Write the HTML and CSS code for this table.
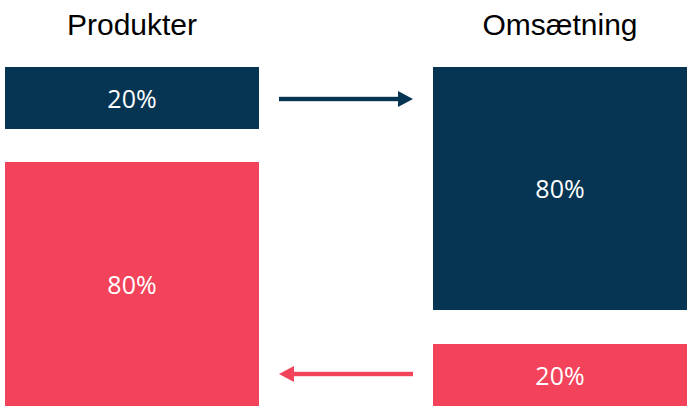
FILE: index.html
```html
<!DOCTYPE html>
<html lang="da">
<head>
<meta charset="utf-8">
<title>Produkter og omsætning</title>
<link rel="stylesheet" href="styles.css">
</head>
<body>
<div class="chart">
  <div class="col">
    <div class="title">Produkter</div>
    <div class="box navy small">20%</div>
    <div class="box pink large left-large">80%</div>
  </div>
  <div class="mid">
    <svg class="arrow arrow-top" width="134" height="16" viewBox="0 0 134 16">
      <rect x="0" y="5.8" width="120" height="4.4" fill="#063553"/>
      <polygon points="119,0 134,8 119,16" fill="#063553"/>
    </svg>
    <svg class="arrow arrow-bottom" width="134" height="16" viewBox="0 0 134 16">
      <rect x="14" y="5.8" width="120" height="4.4" fill="#f2435b"/>
      <polygon points="15,0 0,8 15,16" fill="#f2435b"/>
    </svg>
  </div>
  <div class="col">
    <div class="title">Omsætning</div>
    <div class="box navy large right-large">80%</div>
    <div class="box pink small right-small">20%</div>
  </div>
</div>
</body>
</html>
```
FILE: styles.css
```css
html, body {
  margin: 0;
  padding: 0;
  background: #ffffff;
}
.chart {
  display: flex;
  padding-left: 5px;
  width: 692px;
  height: 411px;
  box-sizing: border-box;
}
.col {
  width: 254px;
  display: flex;
  flex-direction: column;
}
.title {
  height: 67px;
  box-sizing: border-box;
  padding-top: 10px;
  font-family: "Liberation Sans", Arial, sans-serif;
  font-size: 30px;
  line-height: 30px;
  color: #000;
  text-align: center;
}
.box {
  display: flex;
  align-items: center;
  justify-content: center;
  color: #ffffff;
  font-family: "Open Sans", Lato, sans-serif;
  font-size: 25px;
  line-height: 1;
}
.navy { background: #063553; }
.pink { background: #f2435b; }
.small { height: 62px; }
.left-large {
  height: 244px;
  margin-top: 33px;
}
.right-large {
  height: 243px;
}
.right-small {
  margin-top: 34px;
}
.mid {
  width: 174px;
  display: flex;
  flex-direction: column;
}
.arrow {
  display: block;
  margin-left: 20px;
}
.arrow-top {
  margin-top: 91px;
}
.arrow-bottom {
  margin-top: 259px;
}
```
